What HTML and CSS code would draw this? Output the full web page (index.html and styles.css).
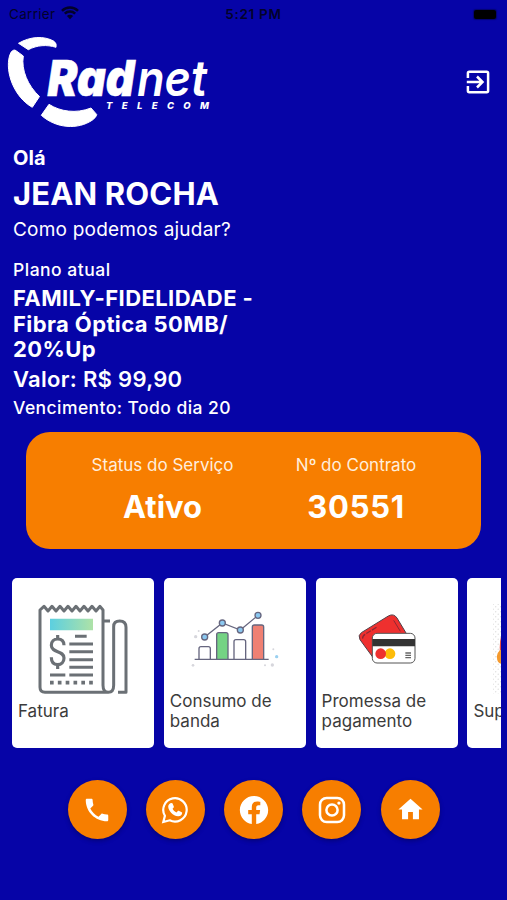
FILE: index.html
```html
<!DOCTYPE html>
<html lang="pt-BR">
<head>
<meta charset="utf-8">
<meta name="viewport" content="width=device-width, initial-scale=1">
<title>Radnet Telecom</title>
<link rel="stylesheet" href="styles.css">
</head>
<body>
<div class="app">
  <div class="status">
    <div class="status-left"><span>Carrier</span>
      <svg width="18" height="14" viewBox="0 0 18 14"><path d="M1 4.8a11.4 11.4 0 0 1 16 0M3.8 7.7a7.4 7.4 0 0 1 10.4 0" fill="none" stroke="#02022a" stroke-width="2.5"/><path d="M5.9 10a4.4 4.4 0 0 1 6.2 0L9 13.2z" fill="#02022a"/></svg>
    </div>
    <div class="clock">5:21 PM</div>
    <div class="status-right"><span class="battery"></span></div>
  </div>

  <header class="header">
    <svg class="logo" width="214" height="96" viewBox="0 34 214 96">
      <g fill="#fff" stroke="#fff" stroke-width="1" stroke-linejoin="round">
        <path d="M18.500 43.300C30 36.500 44 35.500 54 41.300Q57 43.500 56 47.300C47 44.500 37 45 28.300 49.700Z"/>
        <path d="M13.300 50.300Q15 49.500 16.500 51L23.300 56C21 70 28 86 39.500 96.500L32.300 107.300C14 97 5 72 9.500 56Q10.500 51.500 13.300 50.300Z"/>
        <path d="M49 104.300C60 111.500 76 114 91 108L96.700 114.500Q96.500 117 92.500 120C78 130 56 128.500 41.300 115.300Z"/>
      </g>
      <g class="logo-type">
        <text x="47.500" y="95.700" textLength="87" lengthAdjust="spacingAndGlyphs" class="logo-bold">Rad</text>
        <text x="137" y="95.700" textLength="70" lengthAdjust="spacingAndGlyphs" class="logo-light">net</text>
        <text x="106" y="108.800" textLength="103" class="logo-sub">TELECOM</text>
      </g>
    </svg>
    <svg class="logout" width="24" height="24" viewBox="0 0 24 24" fill="none" stroke="#fff" stroke-width="2.500"><path d="M1.900 8V3.200q0-1.400 1.400-1.400h17.400q1.400 0 1.400 1.400v17.600q0 1.400-1.400 1.400H3.300q-1.400 0-1.400-1.400V16M.8 12h15.400M11 6.500l5.500 5.500-5.500 5.500"/></svg>
  </header>

  <section class="intro">
    <p class="hello">Olá</p>
    <h1 class="name">JEAN ROCHA</h1>
    <p class="help">Como podemos ajudar?</p>
    <p class="plan-label">Plano atual</p>
    <p class="plan">FAMILY-FIDELIDADE -<br>Fibra Óptica 50MB/<br>20%Up</p>
    <p class="price">Valor: R$ 99,90</p>
    <p class="due">Vencimento: Todo dia 20</p>
  </section>

  <section class="contract">
    <div class="cell"><span class="cell-label">Status do Serviço</span><strong class="cell-value">Ativo</strong></div>
    <div class="cell"><span class="cell-label">Nº do Contrato</span><strong class="cell-value number">30551</strong></div>
  </section>

  <section class="cards">
    <article class="card">
      <svg width="142" height="120" viewBox="21 24 426 360">
        <defs><linearGradient id="band"><stop offset="0" stop-color="#5ccfe0"/><stop offset="1" stop-color="#aee2a7"/></linearGradient></defs>
        <path fill="url(#band)" d="M135 146h129v35H135z"/>
        <g fill="none" stroke="#6b7075" stroke-width="9">
          <path stroke-linejoin="round" d="M310 367H120Q105 367 105 352V120L117 109L129 123L141 109L153 123L165 109L177 123L189 109L201 123L213 109L225 123L237 109L249 123L261 109L273 123L285 109L294 120V346Q294 367 310 367Q326 367 326 346V170Q326 153 344 153Q363 153 363 172V367H339M294 153h21"/>
          <path d="M210 199h35M193 222h71M193 245h71M193 269h71M193 292h71M193 315h71M135 315h46"/>
          <path d="M135 338h129" stroke-width="11" stroke-dasharray="11 12.500"/>
          <path d="M177 226C177 211 169 207 158 207S139 214 139 226C139 250 177 240 177 264C177 277 169 284 158 284S139 277 139 262M158 195v13M158 283v14" stroke-width="9.500"/>
        </g>
      </svg>
      <p class="label">Fatura</p>
    </article>
    <article class="card">
      <svg width="142" height="120" viewBox="26 24 426 360">
        <g stroke="#66667f" stroke-width="4" fill="#fff">
          <path d="M131 268V236q0-6 6-6h22q6 0 6 6v32M236 268V215q0-6 6-6h23q6 0 6 6v53"/>
          <path fill="#74d384" d="M184 268V194q0-6 6-6h22q6 0 6 6v74"/>
          <path fill="#ef8073" d="M291 268V171q0-6 6-6h22q6 0 6 6v97"/>
          <path fill="none" d="M118 268h222M148 201l53-42 54 21 53-44"/>
          <g fill="#8bc8f0"><circle cx="148" cy="201" r="9"/><circle cx="201" cy="159" r="9"/><circle cx="255" cy="180" r="9"/><circle cx="308" cy="136" r="9"/></g>
        </g>
        <g fill="#d6d6dc"><circle cx="121" cy="200" r="5"/><circle cx="130" cy="183" r="3"/><circle cx="113" cy="286" r="4"/><circle cx="354" cy="238" r="3"/><circle cx="351" cy="285" r="5"/><circle cx="329" cy="286" r="3"/><circle cx="364" cy="260" r="5" fill="#9ad0f0"/></g>
      </svg>
      <p class="label">Consumo de<br>banda</p>
    </article>
    <article class="card">
      <svg width="142" height="120" viewBox="17 24 426 360">
        <path d="M153 188L234 138Q250 129 260 144L290 194V262L192 268L149 209Q142 196 153 188Z" fill="#ee302f" stroke="#514049" stroke-width="3"/>
        <path d="M157 206q-1-8 7-13l36-22" fill="none" stroke="#8d2934" stroke-width="4" stroke-dasharray="16 4"/>
        <path d="M250 151l20 33" stroke="#8d2934" stroke-width="3"/>
        <rect x="186" y="190" width="128" height="89" rx="14" fill="#fff" stroke="#555" stroke-width="3"/>
        <path fill="#333" d="M186 207h128v22H186z"/>
        <circle cx="239" cy="251" r="16" fill="#fdbc09"/><circle cx="211" cy="251" r="16" fill="#ee302f"/>
        <path d="M285 249h17M285 256h17M285 263h17" stroke="#666" stroke-width="4"/>
      </svg>
      <p class="label">Promessa de<br>pagamento</p>
    </article>
    <article class="card">
      <svg width="142" height="120" viewBox="0 0 142 120">
        <defs><pattern id="dots" width="5" height="5" patternUnits="userSpaceOnUse"><circle cx="1.200" cy="1.200" r=".7" fill="#dedede"/><circle cx="3.700" cy="3.700" r=".7" fill="#dedede"/></pattern></defs>
        <path fill="url(#dots)" d="M26 26h90v90H26z"/>
        <path fill="#e84a3b" d="M35 55q-3 8-2 20l9 8V50z"/><path fill="#f59a2d" d="M33 72q-4 4-3 8 0 5 5 6l7-2V73z"/>
      </svg>
      <p class="label">Suporte</p>
    </article>
  </section>

  <nav class="actions">
    <a class="round"><svg width="30" height="30" viewBox="0 0 24 24"><path d="M6.620 10.790c1.440 2.830 3.760 5.140 6.590 6.590l2.200-2.200c.27-.27.67-.36 1.020-.24 1.120.37 2.330.57 3.570.57.55 0 1 .45 1 1V20c0 .55-.45 1-1 1-9.390 0-17-7.610-17-17 0-.55.45-1 1-1h3.500c.55 0 1 .45 1 1 0 1.250.2 2.450.57 3.570.11.35.03.74-.25 1.020z"/></svg></a>
    <a class="round"><svg width="28" height="28" viewBox="0 0 28 28"><path d="M2.300 26l1.600-6.200A11.700 11.700 0 1 1 8.700 24.300Z" fill="none" stroke="#fff" stroke-width="2.200"/><path transform="translate(4.700 4.200) scale(.78)" d="M7.800 3.500c.5 0 .8.200 1 .7l1.600 3.900c.2.500.1.900-.2 1.300l-1.400 1.700c1.100 2.100 2.900 3.700 5.100 4.700l1.600-1.900c.3-.4.700-.5 1.200-.3l3.800 1.800c.5.200.7.600.6 1.100-.4 3-2.700 4.400-5.300 4.200C9.200 20.200 3.800 14.200 3.200 8.500 3 5.800 5 3.500 7.800 3.500z"/></svg></a>
    <a class="round"><svg width="34" height="34" viewBox="0 0 24 24"><path d="M12 2.040C6.500 2.040 2 6.530 2 12.060C2 17.060 5.660 21.210 10.440 21.960V14.960H7.900V12.060H10.440V9.850C10.440 7.340 11.930 5.960 14.220 5.960C15.310 5.960 16.450 6.150 16.450 6.150V8.620H15.190C13.950 8.620 13.560 9.390 13.560 10.180V12.060H16.340L15.890 14.960H13.560V21.960A10 10 0 0 0 22 12.060C22 6.530 17.500 2.040 12 2.040Z"/></svg></a>
    <a class="round"><svg width="32" height="32" viewBox="0 0 24 24"><g fill="none" stroke="#fff" stroke-width="1.900"><rect x="3" y="3" width="18" height="18" rx="5"/><circle cx="12" cy="12" r="4.200"/></g><circle cx="17.200" cy="6.800" r="1.250"/></svg></a>
    <a class="round"><svg width="29" height="29" viewBox="0 0 24 24"><path d="M10 20v-6h4v6h5v-8h3L12 3 2 12h3v8z"/></svg></a>
  </nav>
</div>
</body>
</html>
```
FILE: styles.css
```css
* { box-sizing: border-box; }
body { margin: 0; background: #0604a7; }
p, h1 { margin: 0; }
svg { display: block; }

.app {
  width: 507px;
  height: 900px;
  overflow: hidden;
  background: #0604a7;
  color: #fff;
  font-family: Inter, "Liberation Sans", sans-serif;
  display: flex;
  flex-direction: column;
}

.status {
  height: 28px;
  padding: 0 9px;
  display: grid;
  grid-template-columns: 1fr auto 1fr;
  align-items: center;
  color: #02022a;
  font-size: 13.500px;
  flex: none;
}
.status-left { display: flex; align-items: center; gap: 6px; letter-spacing: .3px; }
.status-left svg { position: relative; top: -1px; }
.clock { font-weight: 600; letter-spacing: .7px; }
.status-right { display: flex; justify-content: flex-end; }
.battery { width: 22px; height: 9px; border-radius: 2px; background: #000; box-shadow: 0 0 1px 1px #040470; margin-right: 2px; }

.header { height: 112px; padding: 6px 17px 0 0; display: flex; justify-content: space-between; flex: none; }
.logout { margin-top: 36px; }
.logo-type { fill: #fff; font-family: Inter, sans-serif; font-style: italic; }
.logo-bold { font-size: 50px; font-weight: 900; stroke: #fff; stroke-width: .6px; }
.logo-light { font-size: 50px; font-weight: 600; }
.logo-sub { font-size: 9.500px; font-weight: 800; }

.intro { height: 292px; padding: 6px 13px 0; flex: none; display: flex; flex-direction: column; align-items: flex-start; }
.hello { font-size: 20px; line-height: 24px; font-weight: 700; letter-spacing: .1px; }
.name { font-size: 31px; line-height: 38px; font-weight: 700; margin-top: 5px; letter-spacing: .15px; }
.help { font-size: 19px; line-height: 24px; margin-top: 5px; letter-spacing: .22px; }
.plan-label { font-size: 17.500px; line-height: 22px; font-weight: 500; margin-top: 17px; letter-spacing: .5px; }
.plan { font-size: 22px; line-height: 25.700px; font-weight: 700; margin-top: 5px; letter-spacing: .4px; }
.price { font-size: 22px; line-height: 26px; font-weight: 600; margin-top: 3px; letter-spacing: .3px; }
.due { font-size: 17.500px; line-height: 22px; font-weight: 500; margin-top: 5px; letter-spacing: .43px; }

.contract {
  width: 455px;
  height: 116.500px;
  margin-left: 26.300px;
  border-radius: 24px;
  background: #f77e00;
  padding: 22px 29px 0 39.500px;
  display: grid;
  grid-template-columns: 193.500px 193.500px;
  flex: none;
}
.cell { display: flex; flex-direction: column; align-items: center; }
.cell-label { font-size: 17px; line-height: 22px; color: #ffeedd; }
.cell-value { font-size: 31px; line-height: 40px; font-weight: 700; margin-top: 11px; }
.number { letter-spacing: .7px; }

.cards { width: 489px; margin: 29.500px 0 0 12px; display: flex; gap: 9.800px; overflow: hidden; flex: none; }
.card { width: 142px; height: 170px; flex: none; border-radius: 5px; background: #fff; color: #3b3b3b; }
.label { height: 42px; margin-top: -8px; padding-left: 6px; display: flex; align-items: center; font-size: 17px; line-height: 20.500px; }

.actions { display: flex; justify-content: center; gap: 19.250px; margin-top: 32px; }
.round { width: 59px; height: 59px; border-radius: 50%; background: #f77e00; box-shadow: 0 2px 4px rgba(0, 0, 40, .35); display: flex; align-items: center; justify-content: center; }
.round svg { fill: #fff; }
```
